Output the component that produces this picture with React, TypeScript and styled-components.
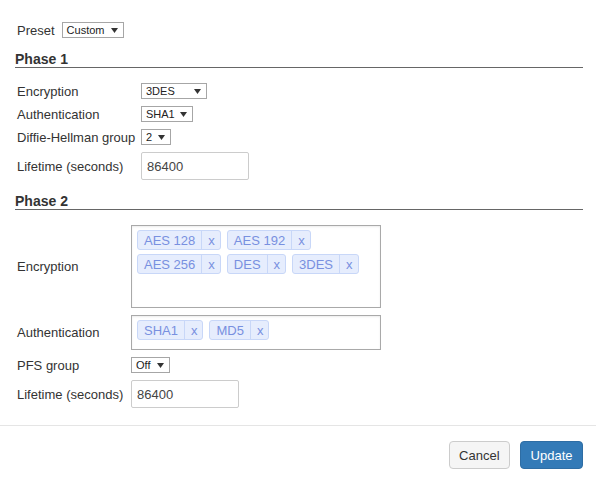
import React from "react";
import styled, { createGlobalStyle } from "styled-components";

const GlobalStyle = createGlobalStyle`
  html, body {
    margin: 0;
    padding: 0;
    background: #fff;
  }
  body {
    font-family: "Liberation Sans", Arial, sans-serif;
    font-size: 13px;
    color: #333;
  }
`;

const Modal = styled.div`
  width: 596px;
  min-height: 483px;
  display: flex;
  flex-direction: column;
  background: #fff;
`;

const Body = styled.div`
  flex: 1;
  padding: 22px 13px 17px 15px;
  display: flex;
  flex-direction: column;
`;

const PresetRow = styled.div`
  display: flex;
  align-items: center;
  gap: 7px;
  padding-left: 2px;
`;

const SectionTitle = styled.h4`
  margin: 13px 0 15px;
  font-size: 14px;
  font-weight: bold;
  line-height: 16px;
  color: #333;
  border-bottom: 1px solid #666;
`;

const FieldGrid = styled.div<{ $labelWidth: number }>`
  display: grid;
  grid-template-columns: ${(p) => p.$labelWidth}px auto;
  row-gap: 7px;
  align-items: center;
  padding-left: 2px;
`;

const Label = styled.span`
  white-space: nowrap;
  line-height: 15px;
`;

const SelectBox = styled.div<{ $width: number }>`
  justify-self: start;
  box-sizing: border-box;
  width: ${(p) => p.$width}px;
  height: 16px;
  display: inline-flex;
  align-items: center;
  justify-content: space-between;
  padding: 0 5px 0 4px;
  border: 1px solid #a6a6a6;
  background: #fff;
  font-size: 11px;
  color: #222;
  cursor: default;
`;

const TextInput = styled.input`
  justify-self: start;
  box-sizing: border-box;
  width: 108px;
  height: 28px;
  padding: 0 5px;
  border: 1px solid #ccc;
  border-radius: 2px;
  font-family: inherit;
  font-size: 13px;
  color: #444;
  outline: none;
`;

const TagBox = styled.div<{ $height: number }>`
  box-sizing: border-box;
  width: 250px;
  height: ${(p) => p.$height}px;
  padding: 4px 5px;
  border: 1px solid #a9a9a9;
  box-shadow: inset 0 1px 2px rgba(0, 0, 0, 0.08);
  display: flex;
  flex-wrap: wrap;
  align-content: flex-start;
  gap: 4px 6px;
`;

const Tag = styled.span`
  box-sizing: border-box;
  height: 20px;
  display: inline-flex;
  align-items: stretch;
  border: 1px solid #c8d7f8;
  border-radius: 3px;
  background: #e6edfd;
  color: #7890e0;
  font-size: 13px;
`;

const TagText = styled.span`
  display: flex;
  align-items: center;
  padding: 0 6px;
`;

const TagRemove = styled.span`
  display: flex;
  align-items: center;
  padding: 0 5px 0 6px;
  border-left: 1px solid #c8d7f8;
  cursor: pointer;
`;

const Footer = styled.div`
  border-top: 1px solid #e5e5e5;
  padding: 15px 13px 15px 15px;
  display: flex;
  justify-content: flex-end;
  gap: 10px;
`;

const Button = styled.button<{ $primary?: boolean }>`
  box-sizing: border-box;
  height: 28px;
  padding: 0 9.5px;
  border-radius: 4px;
  font-family: inherit;
  font-size: 13px;
  cursor: pointer;
  border: 1px solid ${(p) => (p.$primary ? "#2e6da4" : "#ccc")};
  background: ${(p) => (p.$primary ? "#337ab7" : "#f5f5f5")};
  color: ${(p) => (p.$primary ? "#fff" : "#333")};
`;

const Arrow = () => (
  <svg width="7" height="5" viewBox="0 0 7 5">
    <polygon points="0,0 7,0 3.5,5" fill="#333" />
  </svg>
);

const Select = ({ value, width }: { value: string; width: number }) => (
  <SelectBox $width={width}>
    <span>{value}</span>
    <Arrow />
  </SelectBox>
);

const Tags = ({ items, height }: { items: string[]; height: number }) => (
  <TagBox $height={height}>
    {items.map((item) => (
      <Tag key={item}>
        <TagText>{item}</TagText>
        <TagRemove>x</TagRemove>
      </Tag>
    ))}
  </TagBox>
);

const App = () => {
  const [lifetime1, setLifetime1] = React.useState("86400");
  const [lifetime2, setLifetime2] = React.useState("86400");

  return (
    <>
      <GlobalStyle />
      <Modal>
        <Body>
          <PresetRow>
            <Label>Preset</Label>
            <Select value="Custom" width={62} />
          </PresetRow>

          <SectionTitle>Phase 1</SectionTitle>
          <FieldGrid $labelWidth={124}>
            <Label>Encryption</Label>
            <Select value="3DES" width={66} />
            <Label>Authentication</Label>
            <Select value="SHA1" width={52} />
            <Label>Diffie-Hellman group</Label>
            <Select value="2" width={30} />
            <Label>Lifetime (seconds)</Label>
            <TextInput
              value={lifetime1}
              onChange={(e) => setLifetime1(e.target.value)}
            />
          </FieldGrid>

          <SectionTitle>Phase 2</SectionTitle>
          <FieldGrid $labelWidth={114}>
            <Label>Encryption</Label>
            <Tags
              items={["AES 128", "AES 192", "AES 256", "DES", "3DES"]}
              height={83}
            />
            <Label>Authentication</Label>
            <Tags items={["SHA1", "MD5"]} height={35} />
            <Label>PFS group</Label>
            <Select value="Off" width={39} />
            <Label>Lifetime (seconds)</Label>
            <TextInput
              value={lifetime2}
              onChange={(e) => setLifetime2(e.target.value)}
            />
          </FieldGrid>
        </Body>
        <Footer>
          <Button>Cancel</Button>
          <Button $primary>Update</Button>
        </Footer>
      </Modal>
    </>
  );
};

export default App;
